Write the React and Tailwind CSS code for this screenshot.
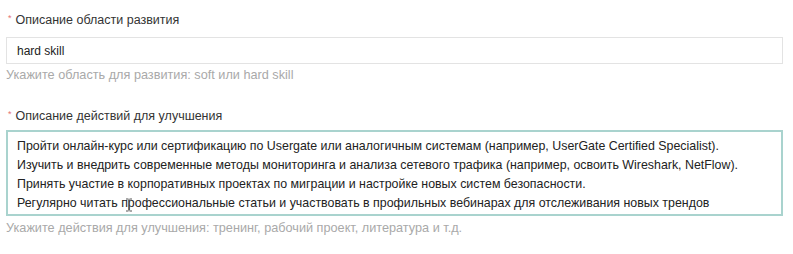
export default function App() {
  const lines = [
    "Пройти онлайн-курс или сертификацию по Usergate или аналогичным системам (например, UserGate Certified Specialist).",
    "Изучить и внедрить современные методы мониторинга и анализа сетевого трафика (например, освоить Wireshark, NetFlow).",
    "Принять участие в корпоративных проектах по миграции и настройке новых систем безопасности.",
    "Регулярно читать профессиональные статьи и участвовать в профильных вебинарах для отслеживания новых трендов",
  ];
  return (
    <div
      className="w-[793px] h-[254px] bg-white overflow-hidden px-[6px] pt-[12px] text-[#333]"
      style={{ fontFamily: '"Liberation Sans", Arial, sans-serif' }}
    >
      <div className="flex items-center h-[17px] text-[12.5px] pl-[2px]">
        <span className="text-[#e57373] text-[9px] mr-[4px] -mt-[4px]">*</span>
        <span>Описание области развития</span>
      </div>
      <div className="mt-[8px] w-[777px] h-[27px] border border-[#e3e3e3] flex items-center pl-[10px] text-[12px] text-[#222]">
        hard skill
      </div>
      <div className="mt-[3px] h-[16px] text-[12.7px] text-[#a9a9a9] leading-[16px]">
        Укажите область для развития: soft или hard skill
      </div>

      <div className="mt-[25px] flex items-center h-[17px] text-[12.5px] pl-[2px]">
        <span className="text-[#e57373] text-[9px] mr-[4px] -mt-[4px]">*</span>
        <span>Описание действий для улучшения</span>
      </div>
      <div className="relative mt-[5px] w-[777px] h-[86px] border-2 border-[#a9d3ce] pl-[9px] pt-[5px] text-[12.4px] text-[#222] leading-[19px]">
        {lines.map((l, i) => (
          <div key={i} className="whitespace-nowrap">
            {l}
          </div>
        ))}
        <svg
          className="absolute left-[117px] top-[66px]"
          width="8"
          height="14"
          viewBox="0 0 8 14"
        >
          <path
            d="M1 1h2.5M4.5 1H7M4 1.5v11M1 13h2.5M4.5 13H7"
            stroke="#555"
            strokeWidth="1.2"
            fill="none"
          />
        </svg>
      </div>
      <div className="mt-[4px] h-[16px] text-[12.7px] text-[#a9a9a9] leading-[16px]">
        Укажите действия для улучшения: тренинг, рабочий проект, литература и т.д.
      </div>
    </div>
  );
}
